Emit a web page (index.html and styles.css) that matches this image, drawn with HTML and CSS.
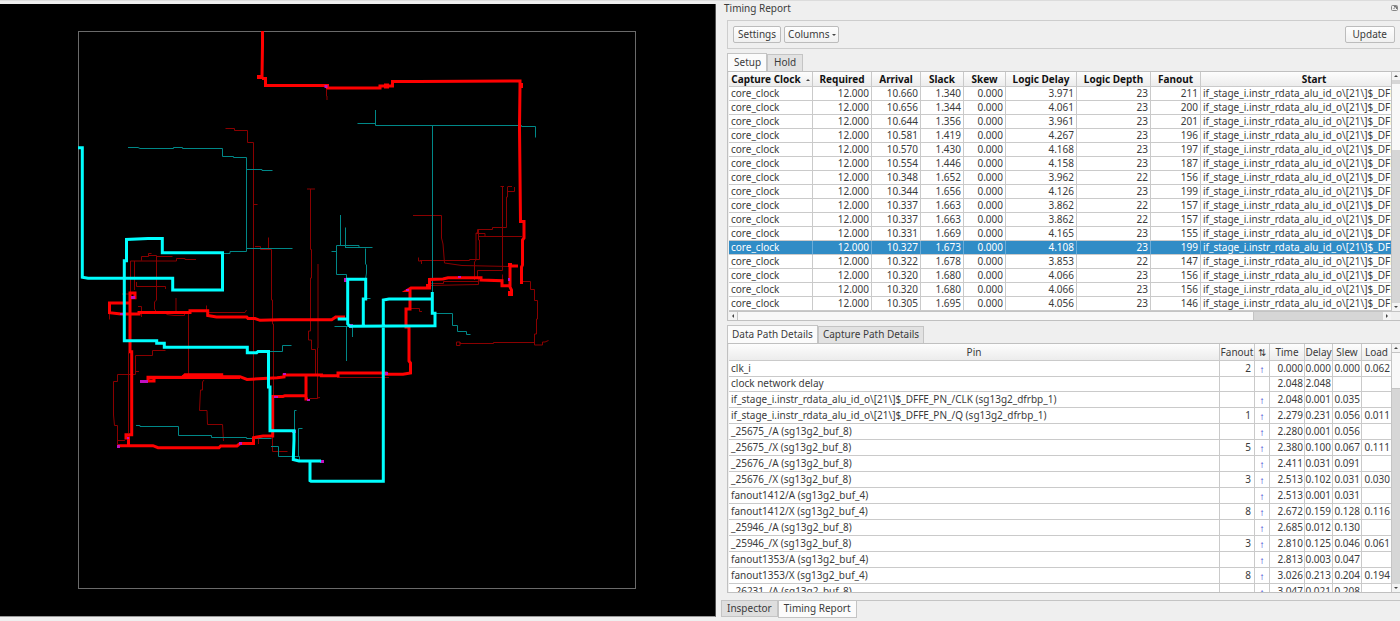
FILE: index.html
```html
<!DOCTYPE html>
<html lang="en">
<head>
<meta charset="utf-8">
<title>Timing Report</title>
<link rel="stylesheet" href="styles.css">
</head>
<body>
<div class="app">
  <main class="viewer">
    <svg class="layout" viewBox="0 4 715 612" role="img" aria-label="Chip layout with timing path">
      <rect class="die" x="78.5" y="31.5" width="557" height="557"/>
      <g class="net net-red">
        <path d="M225.5 128.5H234.5V130.5H247.5V142.5H253.5V437M253.5 204.5H257.5M307 189H315M310.5 189V249.5H311.5V278H310.5V331H308.5V340H311.5V349.5H315.5V375"/>
        <path d="M318 264V348H317.5V398.5H309.5M317 398L320 397.5M255 246.5H260.5V249.5H271.5V300H272.5V324H273.5V395M268.5 237.5V249M272.5 436V451.5H287.5M326.5 90V96H327V100"/>
        <path d="M130.5 293V261H176.5V258.5H185V259.5H196M134.5 261V290M141.5 260.5V256.5H148.5V253.5H151.5M148.5 255.5H156.5V300L154.5 302V309L156.5 312M156.5 256.5H172.5M136.5 282V286.5H165.5V289M176 298V312M122 294H130M138 306.5H141.5V317M166.5 314.5L174 315.5H184.5V312M207.5 312.5H245L246.5 310M206.5 305.5V312M188.5 312V376M109.5 313V319.5"/>
        <path d="M165.5 350.5H152.5V355.5H135.5V374.5H117.5V381.5H113.5V415L114.5 425.5H117.5V445M139 371.5H135.5M117.5 440.5H125M128.5 353V433M204 380L202.5 382V390H200.5L199.5 410.5H207L207.5 424.5H222.5L223.5 441M258.5 436V444M337 377.5H389"/>
        <path d="M413 215.5H441.5V238L443 244L444.5 263L462 265.5L510 266.5M500.5 186.5H504M502.5 186.5V270.5H477.5V278M507.5 187V197H506.5V227.5H492.5V229.5H477.5V233H476V260L474.5 262V280M507.5 191.5H514.5V187M507.5 186.5H512M476 233.5H485V236M478.5 230V240H479.5V259.5H469.5V260.5H420M478.5 236.5H522M418.5 257.5V261H421.5V264M430 283.5H443.5V281.5H478.5V278M430 285.5L478.5 284.5V281M410 308.5H419.5V311.5H422M502.5 274.5V281"/>
        <path d="M522 281.5H530.5V289.5H534.5V300.5H537.5V319H536.5V334H534.5V345H542.5V342H545L548.5 340.5M534.5 342.5H493.5V343.5H460V342H456.5V345.5H460V342"/>
      </g>
      <g class="net net-cyan">
        <path d="M128 147.5H138L140 148.5H173.5V147.5H182.5V148.5H222.5V156.5H233.5V157.5H246.5V251.5H230V253.5H223M246.5 248.5H292.5M246.5 169.5H262V170.5H272.5"/>
        <path d="M357.5 123.5H375M375.5 110V125.5H521.5V126.5H535.5V137.5M432.5 125.5V292"/>
        <path d="M340.5 215V245M345.5 227.5V247.5H372.5M331.5 251.5H336.5M345 247.5H359V245.5H336.5V274.5H346.5V279M365.5 248.5V264L366.5 265V273L365.5 279M365 298.5H370.5M334.5 326.5H350M346.5 326V361M352.5 327V337M269 351.5H282.5V345.5H291.5"/>
        <path d="M435 313.5H452.5V325.5H457.5V331.5H466.5V334.5H470.5M136 425.5H140V426.5H178.5V435.5H211.5V437.5H246.5V438.5H271.5M271 446.5H278.5V456.5H299.5V461M298.5 456V428.5H302.5M294.5 430V410.5H296.5"/>
      </g>
      <g class="path path-red">
        <path d="M262.5 31V45L262 77H259M262 78.5H265.5V85.5H327.5V88H380V86H392.5V81.5H418L520 81V86L519.5 128L520.5 221.5H524V238L522.5 240V265L521.5 267V284M518 266H510V287L511.5 290V294H508.5M510 285.7H502V280.7L481 280V277.7H448L443 279L429.5 279.5V288H411L407 290.5H410V309H406V327H409V361L410.5 363V373L403 374.3H386V373H338V375.7H321.5V375H284V377L277 377.7L247 379.5L240 376.7H183L185 374.7H221.7V377M240 377.5L148 377.3V381H154V378"/>
        <path d="M306 375V399H308M306 395.7H285L283 396.5H272.7V436H263L253.5 437.7V443.5H240L237 446H220.7L219 447.7H158L153 445.7H118M128.5 445.7V438H126V434.7H131.7V351.7H130V293H135V297.7H131M130 303H109.5V312.7L121 314H139V312.5H190V310.7H207.7V315.5L216.5 317H246.7L248 318.5H255L260 320.3L280 319.7H331.7L335.7 317H345"/>
      </g>
      <g class="blob blob-red">
        <path d="M384 83.500h5v5h-5zM257 75h6v4h-6zM426 284h5v5h-5zM519 83h4v5h-4zM508 291h5v5h-5zM508 263h4v4h-4z"/>
      </g>
      <g class="via">
        <path d="M140 380h8v3h-8zM131 296h4v3h-4zM120 313h3v2h-3zM283 373h3v2h-3zM324.500 85h3v3h-3zM458 276h3v2h-3zM508 278h2v3h-2zM385 372h3v3h-3zM117 445h3v3h-3zM239 442h3v3h-3zM274 396h4v2h-4zM127 437h2v2h-2zM292 430h4v3h-4zM320 460h4v3h-4zM307 399h3v2h-3zM344 278h4v4h-4zM349 324h4v4h-4zM406 289h3v2h-3z"/>
      </g>
      <g class="path path-cyan">
        <path d="M78 147.700H82.300V277.300L88 278.300H172.700V290H224M222.500 291V252.700H162.300V238.500H148L126.500 239.500V260.700H124.300V340.700H156.700V343.300H164.300V347.300H247.300V352.700H256.700L258 351.500H268.500V387H270V430.700H294V440L293.300 459.500L299 461H321M310 461V480.700L311 481.300H383.300V300L389 299H432.300M432.300 292V313.300H435V325.700L350 326.300L347.700 324V279.300H365.700V299H363.300V326M337.700 319H348"/>
      </g>
    </svg>
  </main>

  <aside class="dock">
    <header class="dock-title">
      <span>Timing Report</span>
      <button class="float-btn" type="button" aria-label="Float panel">
        <svg viewBox="0 0 8 8" width="8" height="8"><rect x=".5" y="1.500" width="6" height="5" rx="1" fill="none" stroke="#888"/><path d="M2.500 5L5 2.500M3 2.500H5.500V5" fill="none" stroke="#777"/></svg>
      </button>
    </header>

    <section class="dock-body">
      <div class="toolbar">
        <button class="btn" type="button">Settings</button>
        <button class="btn btn-menu" type="button">Columns<i class="tri tri-down"></i></button>
        <button class="btn btn-update" type="button">Update</button>
      </div>

      <div class="tabs tabs-setup" role="tablist">
        <button class="tab active" type="button" role="tab" aria-selected="true">Setup</button>
        <button class="tab" type="button" role="tab" aria-selected="false">Hold</button>
      </div>
      <div class="frame frame-paths">
        <div class="cols">
          <div class="view">
            <table class="grid paths">
              <colgroup><col class="c-clock"><col class="c-req"><col class="c-arr"><col class="c-slack"><col class="c-skew"><col class="c-ldelay"><col class="c-ldepth"><col class="c-fan"><col></colgroup>
              <thead><tr><th>Capture Clock<i class="tri tri-up"></i></th><th>Required</th><th>Arrival</th><th>Slack</th><th>Skew</th><th>Logic Delay</th><th>Logic Depth</th><th>Fanout</th><th class="start">Start</th></tr></thead>
              <tbody id="paths"></tbody>
            </table>
          </div>
          <div class="vbar"><i class="step"><b class="tri tri-up"></b></i><i class="gap"></i><i class="thumb thumb-paths"></i><i class="rest"></i><i class="step"><b class="tri tri-down"></b></i></div>
        </div>
        <div class="hbar"><i class="step"><b class="tri tri-left"></b></i><i class="thumb"></i><i class="rest"></i><i class="step"><b class="tri tri-right"></b></i><i class="corner"></i></div>
      </div>

      <div class="tabs tabs-details" role="tablist">
        <button class="tab active" type="button" role="tab" aria-selected="true">Data Path Details</button>
        <button class="tab" type="button" role="tab" aria-selected="false">Capture Path Details</button>
      </div>
      <div class="frame frame-details">
        <div class="cols">
          <div class="view">
            <table class="grid details">
              <colgroup><col><col class="d-fan"><col class="d-dir"><col class="d-time"><col class="d-delay"><col class="d-slew"><col class="d-load"></colgroup>
              <thead><tr><th>Pin</th><th>Fanout</th><th>⇅</th><th>Time</th><th>Delay</th><th>Slew</th><th>Load</th></tr></thead>
              <tbody id="details"></tbody>
            </table>
          </div>
          <div class="vbar"><i class="step"><b class="tri tri-up"></b></i><i class="thumb thumb-details"></i><i class="rest"></i><i class="step"><b class="tri tri-down"></b></i></div>
        </div>
      </div>
    </section>

    <nav class="dock-tabs" role="tablist">
      <button class="dock-tab" type="button" role="tab" aria-selected="false">Inspector</button>
      <button class="dock-tab active" type="button" role="tab" aria-selected="true">Timing Report</button>
    </nav>
  </aside>
</div>
<script src="script.js"></script>
</body>
</html>
```
FILE: styles.css
```css
* { box-sizing: border-box; }

body {
  margin: 0;
  background: #efefef;
  color: #3b3b3b;
  font: 10px/14px "Noto Sans", "Open Sans", sans-serif;
}

button {
  margin: 0;
  padding: 0;
  color: inherit;
  font: inherit;
}

.app {
  display: grid;
  grid-template-columns: minmax(0, 716fr) minmax(0, 684fr);
  height: 100vh;
  border-top: 1px solid #dcdcdc;
}

/* Layout viewer */
.viewer {
  min-height: 0;
  margin: 3px 0 4px;
  background: #000;
  border-right: 1px solid #555;
  border-bottom: 1px solid #999;
}
.layout { display: block; width: 100%; height: 100%; }
.layout path, .layout rect { fill: none; }
.die { stroke: #6a6a6a; }
.net { stroke-width: 1; }
.net-red { stroke: #8a0000; }
.net-cyan { stroke: #008888; }
.path { stroke-width: 3; }
.path-red { stroke: #f00; }
.path-cyan { stroke: #0ff; }
.layout .blob path { fill: #f00; }
.layout .via path { fill: #c010c0; }

/* Docked panel */
.dock {
  min-height: 0;
  display: flex;
  flex-direction: column;
  padding-left: 5px;
}
.dock-title {
  display: flex;
  justify-content: space-between;
  height: 19px;
  padding: 0 0 0 3px;
}
.float-btn { width: 10px; height: 14px; border: 0; background: none; }

.dock-body {
  flex: 1;
  min-height: 0;
  display: flex;
  flex-direction: column;
  padding-left: 6px;
}
.toolbar {
  display: flex;
  align-items: flex-start;
  gap: 3px;
  height: 29px;
  padding: 5px 5px 0;
  border: 1px solid #cdcdcd;
  border-right: 0;
}
.btn {
  height: 17px;
  padding: 0 4px 2px;
  border: 1px solid #bcbcbc;
  border-radius: 2px;
  background: linear-gradient(#fefefe, #f0f0f0);
  line-height: 14px;
}
.btn-menu { padding: 0 2px 2px 3px; }
.btn-menu .tri { margin-left: 2px; }
.btn-update { margin-left: auto; padding: 0 7px 2px; }

.tri { display: inline-block; vertical-align: middle; border: 2px solid transparent; }
.tri-down { border-top-color: #444; border-bottom: 0; }
.tri-up { border-bottom-color: #444; border-top: 0; }
.tri-left { border-right-color: #444; border-left: 0; }
.tri-right { border-left-color: #444; border-right: 0; }

.tabs { display: flex; align-items: flex-end; height: 18px; margin-top: 4px; }
.tab {
  height: 17px;
  padding: 0 6px 2px;
  border: 1px solid #c4c4c4;
  border-bottom: 0;
  background: #e2e2e2;
}
.tab.active { height: 18px; background: #fbfbfb; }
.tabs-setup .active { padding: 0 5px 2px 6px; }
.tabs-details .tab { padding: 0 4px 2px; }

/* Tables */
.frame {
  display: flex;
  flex-direction: column;
  min-height: 0;
  border: 1px solid #c0c0c0;
  border-right: 0;
  padding-left: 1px;
}
.frame-paths { flex: 250 1 0; }
.frame-details { flex: 250 1 0; }
.cols { flex: 1; display: flex; min-height: 0; }
.view { flex: 1; min-width: 0; overflow: hidden; background: #fff; }
.grid { width: 100%; table-layout: fixed; border-collapse: separate; border-spacing: 0; }
.paths { height: 100%; }
.grid th, .grid td {
  padding: 0 2px 1px;
  border-right: 1px solid #cacaca;
  border-bottom: 1px solid #cacaca;
  white-space: nowrap;
  line-height: 12px;
  text-align: right;
}
.grid th:last-child, .grid td:last-child { border-right: 0; }
.grid td:first-child, .paths td:last-child { text-align: left; }
.grid th {
  padding: 0;
  background: linear-gradient(#fdfdfd, #ececec);
  text-align: center;
}
.paths th { height: 15px; color: #111; font-weight: 700; }
.paths th .tri { margin-left: 5px; }
.paths .start { padding-left: 36px; }
.paths .selected td { background: #308cc6; border-right-color: #6bacd8; color: #fff; }
.details th { height: 17px; font-weight: 400; }
.details td { height: 16px; padding: 0 1px 1px 0; line-height: 14px; }
.details td:first-child { padding-left: 2px; }
.details td:nth-child(2) { padding-right: 3px; }
.details .no-dir td { height: 15px; line-height: 13px; }
.details td:nth-child(3) { padding: 0; color: #1a1acc; font-weight: 700; text-align: center; }
.c-clock { width: 84px; }
.c-req { width: 59px; }
.c-arr { width: 49px; }
.c-slack { width: 43px; }
.c-skew { width: 42px; }
.c-ldelay { width: 71px; }
.c-ldepth { width: 74px; }
.c-fan { width: 50px; }
.d-fan { width: 35px; }
.d-dir { width: 15px; }
.d-time { width: 35px; }
.d-delay { width: 28px; }
.d-slew { width: 29px; }
.d-load { width: 29px; }

/* Scroll bars */
.vbar, .hbar { display: flex; background: #d6d6d6; }
.vbar { flex-direction: column; width: 9px; border-left: 1px solid #c4c4c4; }
.hbar { height: 9px; border-top: 1px solid #c4c4c4; }
.step { display: flex; align-items: center; justify-content: center; flex: 0 0 8px; background: #f4f4f4; }
.thumb { background: #f8f8f8; }
.gap { height: 4px; }
.thumb-paths { height: 66px; }
.thumb-details { height: 37px; border: solid #c4c4c4; border-width: 1px 0; }
.rest { flex: 1; }
.hbar .thumb { flex: 4; border: solid #c4c4c4; border-width: 0 1px; }
.hbar .corner { width: 9px; background: #efefef; }

.dock-tabs {
  display: flex;
  align-items: flex-start;
  height: 21px;
  margin-top: 7px;
  border-top: 1px solid #c4c4c4;
}
.dock-tab {
  height: 16px;
  padding: 0 5px 2px;
  border: 1px solid #c4c4c4;
  border-top: 0;
  background: #dedede;
}
.dock-tab.active { height: 17px; background: #fbfbfb; }
```
FILE: script.js
```js
const START = "if_stage_i.instr_rdata_alu_id_o\\[21\\]$_DFFE";

// arrival, slack, logic delay, logic depth, fanout
const paths = [
  ["10.660", "1.340", "3.971", 23, 211],
  ["10.656", "1.344", "4.061", 23, 200],
  ["10.644", "1.356", "3.961", 23, 201],
  ["10.581", "1.419", "4.267", 23, 196],
  ["10.570", "1.430", "4.168", 23, 197],
  ["10.554", "1.446", "4.158", 23, 187],
  ["10.348", "1.652", "3.962", 22, 156],
  ["10.344", "1.656", "4.126", 23, 199],
  ["10.337", "1.663", "3.862", 22, 157],
  ["10.337", "1.663", "3.862", 22, 157],
  ["10.331", "1.669", "4.165", 23, 155],
  ["10.327", "1.673", "4.108", 23, 199],
  ["10.322", "1.678", "3.853", 22, 147],
  ["10.320", "1.680", "4.066", 23, 156],
  ["10.320", "1.680", "4.066", 23, 156],
  ["10.305", "1.695", "4.056", 23, 146]
];
const selected = 11;

// pin, fanout, direction, time, delay, slew, load
const details = [
  ["clk_i", "2", "↑", "0.000", "0.000", "0.000", "0.062"],
  ["clock network delay", "", "", "2.048", "2.048", "", ""],
  ["if_stage_i.instr_rdata_alu_id_o\\[21\\]$_DFFE_PN_/CLK (sg13g2_dfrbp_1)", "", "↑", "2.048", "0.001", "0.035", ""],
  ["if_stage_i.instr_rdata_alu_id_o\\[21\\]$_DFFE_PN_/Q (sg13g2_dfrbp_1)", "1", "↑", "2.279", "0.231", "0.056", "0.011"],
  ["_25675_/A (sg13g2_buf_8)", "", "↑", "2.280", "0.001", "0.056", ""],
  ["_25675_/X (sg13g2_buf_8)", "5", "↑", "2.380", "0.100", "0.067", "0.111"],
  ["_25676_/A (sg13g2_buf_8)", "", "↑", "2.411", "0.031", "0.091", ""],
  ["_25676_/X (sg13g2_buf_8)", "3", "↑", "2.513", "0.102", "0.031", "0.030"],
  ["fanout1412/A (sg13g2_buf_4)", "", "↑", "2.513", "0.001", "0.031", ""],
  ["fanout1412/X (sg13g2_buf_4)", "8", "↑", "2.672", "0.159", "0.128", "0.116"],
  ["_25946_/A (sg13g2_buf_8)", "", "↑", "2.685", "0.012", "0.130", ""],
  ["_25946_/X (sg13g2_buf_8)", "3", "↑", "2.810", "0.125", "0.046", "0.061"],
  ["fanout1353/A (sg13g2_buf_4)", "", "↑", "2.813", "0.003", "0.047", ""],
  ["fanout1353/X (sg13g2_buf_4)", "8", "↑", "3.026", "0.213", "0.204", "0.194"],
  ["_26231_/A (sg13g2_buf_8)", "", "↑", "3.047", "0.021", "0.208", ""]
];

function addRow(body, cells, className) {
  const row = body.insertRow();
  if (className) row.className = className;
  for (const text of cells) row.insertCell().textContent = text;
}

const pathBody = document.getElementById("paths");
paths.forEach(([arrival, slack, delay, depth, fanout], i) =>
  addRow(pathBody, ["core_clock", "12.000", arrival, slack, "0.000", delay, depth, fanout, START], i === selected ? "selected" : ""));

const detailBody = document.getElementById("details");
details.forEach(cells => addRow(detailBody, cells, cells[2] ? "" : "no-dir"));
```
